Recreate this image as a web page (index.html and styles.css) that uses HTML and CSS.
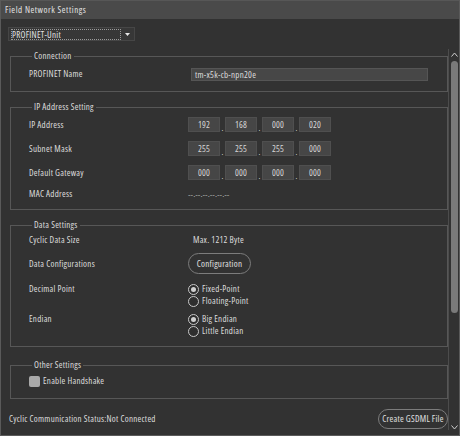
FILE: index.html
```html
<!DOCTYPE html>
<html>
<head>
<meta charset="utf-8">
<link rel="stylesheet" href="styles.css">
</head>
<body>
<div class="window">
  <div class="titlebar">Field Network Settings</div>
  <div class="main">
    <div class="content">
      <div class="select">
        <span class="select-text">PROFINET-Unit</span>
        <svg class="select-arrow" width="5" height="3" viewBox="0 0 5 3"><path d="M0 0H5L2.5 3Z" fill="#e8e8e8"/></svg>
      </div>

      <fieldset class="group g-conn">
        <legend>Connection</legend>
        <div class="row r-name">
          <span class="label">PROFINET Name</span>
          <span class="textbox">tm-x5k-cb-npn20e</span>
        </div>
      </fieldset>

      <fieldset class="group g-ip">
        <legend>IP Address Setting</legend>
        <div class="row r-ip">
          <span class="label">IP Address</span>
          <div class="ip"><span class="oct">192</span><span class="dot">.</span><span class="oct">168</span><span class="dot">.</span><span class="oct">000</span><span class="dot">.</span><span class="oct">020</span></div>
        </div>
        <div class="row r-ip">
          <span class="label">Subnet Mask</span>
          <div class="ip"><span class="oct">255</span><span class="dot">.</span><span class="oct">255</span><span class="dot">.</span><span class="oct">255</span><span class="dot">.</span><span class="oct">000</span></div>
        </div>
        <div class="row r-ip">
          <span class="label">Default Gateway</span>
          <div class="ip"><span class="oct">000</span><span class="dot">.</span><span class="oct">000</span><span class="dot">.</span><span class="oct">000</span><span class="dot">.</span><span class="oct">000</span></div>
        </div>
        <div class="row r-mac">
          <span class="label">MAC Address</span>
          <span class="mac">--.--.--.--.--.--</span>
        </div>
      </fieldset>

      <fieldset class="group g-data">
        <legend>Data Settings</legend>
        <div class="row r-size">
          <span class="label">Cyclic Data Size</span>
          <span class="value">Max. 1212 Byte</span>
        </div>
        <div class="row r-conf">
          <span class="label">Data Configurations</span>
          <span class="pill btn-conf">Configuration</span>
        </div>
        <div class="row r-radio">
          <span class="label">Decimal Point</span>
          <div class="radios">
            <div class="radio checked"><span class="circle"></span>Fixed-Point</div>
            <div class="radio"><span class="circle"></span>Floating-Point</div>
          </div>
        </div>
        <div class="row r-radio r-endian">
          <span class="label">Endian</span>
          <div class="radios">
            <div class="radio checked"><span class="circle"></span>Big Endian</div>
            <div class="radio"><span class="circle"></span>Little Endian</div>
          </div>
        </div>
      </fieldset>

      <fieldset class="group g-other">
        <legend>Other Settings</legend>
        <div class="check"><span class="box"></span>Enable Handshake</div>
      </fieldset>

      <div class="footer">
        <span class="status">Cyclic Communication Status:Not Connected</span>
        <span class="pill btn-gsdml">Create GSDML File</span>
      </div>
    </div>

    <div class="scrollbar">
      <svg class="arrow" width="7" height="5" viewBox="0 0 7 5"><path d="M0.5 4.5L3.5 1L6.5 4.5" fill="none" stroke="#cfcfcf" stroke-width="1"/></svg>
      <div class="track"><div class="thumb"></div></div>
      <svg class="arrow" width="7" height="5" viewBox="0 0 7 5"><path d="M0.5 0.5L3.5 4L6.5 0.5" fill="none" stroke="#cfcfcf" stroke-width="1"/></svg>
    </div>
  </div>
</div>
</body>
</html>
```

FILE: styles.css
```css
* { box-sizing: border-box; }

html, body {
  margin: 0;
  padding: 0;
  background: #323232;
}

body {
  font-family: "Open Sans", "Noto Sans", sans-serif;
  font-stretch: 75%;
  font-weight: 500;
  font-size: 9px;
  letter-spacing: 0.25px;
  line-height: 12px;
  color: #dcdcdc;
}

.window {
  width: 460px;
  height: 436px;
  background: #323232;
  border: 1px solid #5a5a5a;
  border-top: none;
  display: flex;
  flex-direction: column;
  overflow: hidden;
}

.titlebar {
  height: 19px;
  flex: none;
  background: #4a4a4a;
  border-top: 1px solid #575757;
  padding-left: 4px;
  line-height: 17px;
  font-size: 9px;
  font-weight: 400;
  letter-spacing: 0.55px;
  color: #e4e4e4;
}

.main {
  flex: 1;
  display: flex;
}

.content {
  width: 447px;
  flex: none;
  display: flex;
  flex-direction: column;
}

/* dropdown */
.select {
  margin: 8px 0 0 7px;
  width: 127px;
  height: 14px;
  background: #373737;
  border: 1px solid #464646;
  display: flex;
  align-items: center;
  padding: 0 3px 0 2px;
}
.select-text {
  width: 110px;
  height: 11px;
  line-height: 9px;
  border: 1px dotted #9a9a9a;
  color: #e2e2e2;
  white-space: nowrap;
}
.select-arrow {
  margin-left: auto;
  margin-right: 1px;
}

/* group boxes */
.group {
  margin: 9px 0 0 9px;
  padding: 0 0 0 18px;
  border: 1px solid #575757;
  min-width: 0;
}
.group legend {
  margin-left: 3px;
  padding: 0 2px;
  line-height: 12px;
  color: #dcdcdc;
}

.row {
  display: grid;
  grid-template-columns: 159px 1fr;
  align-items: center;
  white-space: nowrap;
}

.g-conn { padding-bottom: 10px; }
.r-name { margin-top: 5px; height: 14px; }
.textbox {
  margin-left: 3px;
  width: 237px;
  height: 13px;
  background: #474747;
  border: 1px solid #555;
  line-height: 11px;
  padding-left: 3px;
  color: #dcdcdc;
}

.g-ip { padding-bottom: 8px; }
.r-ip { height: 15px; margin-top: 9px; }
.r-ip:first-of-type { margin-top: 4px; }
.ip {
  display: flex;
  align-items: flex-end;
}
.oct {
  width: 32px;
  height: 15px;
  background: #464646;
  border: 1px solid #4f4f4f;
  text-align: center;
  line-height: 13px;
  color: #d8d8d8;
}
.dot {
  width: 5px;
  text-align: center;
  line-height: 8px;
  font-size: 8px;
  letter-spacing: 0;
}
.r-mac { height: 14px; margin-top: 7px; }
.mac { font-size: 8px; font-stretch: 100%; letter-spacing: 0; color: #c0c0c0; }

.g-data { padding-bottom: 9px; }
.r-size { height: 12px; margin-top: 3px; }
.value { margin-left: 5px; }
.r-conf { margin-top: 7px; height: 21px; }
.pill {
  border: 1px solid #7c7c7c;
  border-radius: 11px;
  text-align: center;
  color: #e0e0e0;
  white-space: nowrap;
}
.btn-conf {
  width: 63px;
  height: 21px;
  line-height: 19px;
}
.r-radio {
  margin-top: 9px;
  align-items: start;
}
.r-endian { margin-top: 6px; }
.radios { display: flex; flex-direction: column; }
.radio {
  height: 12px;
  display: flex;
  align-items: center;
  gap: 3px;
}
.circle {
  width: 11px;
  height: 11px;
  border: 1px solid #c8c8c8;
  border-radius: 50%;
  display: flex;
  align-items: center;
  justify-content: center;
  background: #2e2e2e;
}
.radio.checked .circle::after {
  content: "";
  width: 5px;
  height: 5px;
  border-radius: 50%;
  background: #d0d0d0;
}

.g-other { padding-bottom: 11px; margin-top: 12px; }
.check {
  margin-top: 4px;
  height: 12px;
  display: flex;
  align-items: center;
  gap: 3px;
}
.box {
  width: 11px;
  height: 11px;
  border-radius: 2px;
  background: #a9a9a9;
}

.footer {
  margin-top: 10px;
  display: flex;
  align-items: center;
  justify-content: space-between;
  padding-left: 8px;
  white-space: nowrap;
}
.btn-gsdml {
  width: 70px;
  height: 20px;
  line-height: 18px;
}

/* scrollbar */
.scrollbar {
  width: 11px;
  flex: none;
  margin-top: 30px;
  height: 381px;
  border-left: 1px solid #4c4c4c;
  display: flex;
  flex-direction: column;
  align-items: center;
  padding-top: 3px;
}
.scrollbar .arrow { flex: none; }
.track {
  flex: 1;
  width: 100%;
  padding: 4px 0 0 1px;
  display: flex;
  justify-content: center;
}
.thumb {
  width: 7px;
  height: 252px;
  background: #7a7a7a;
  border-radius: 4px;
}
```
